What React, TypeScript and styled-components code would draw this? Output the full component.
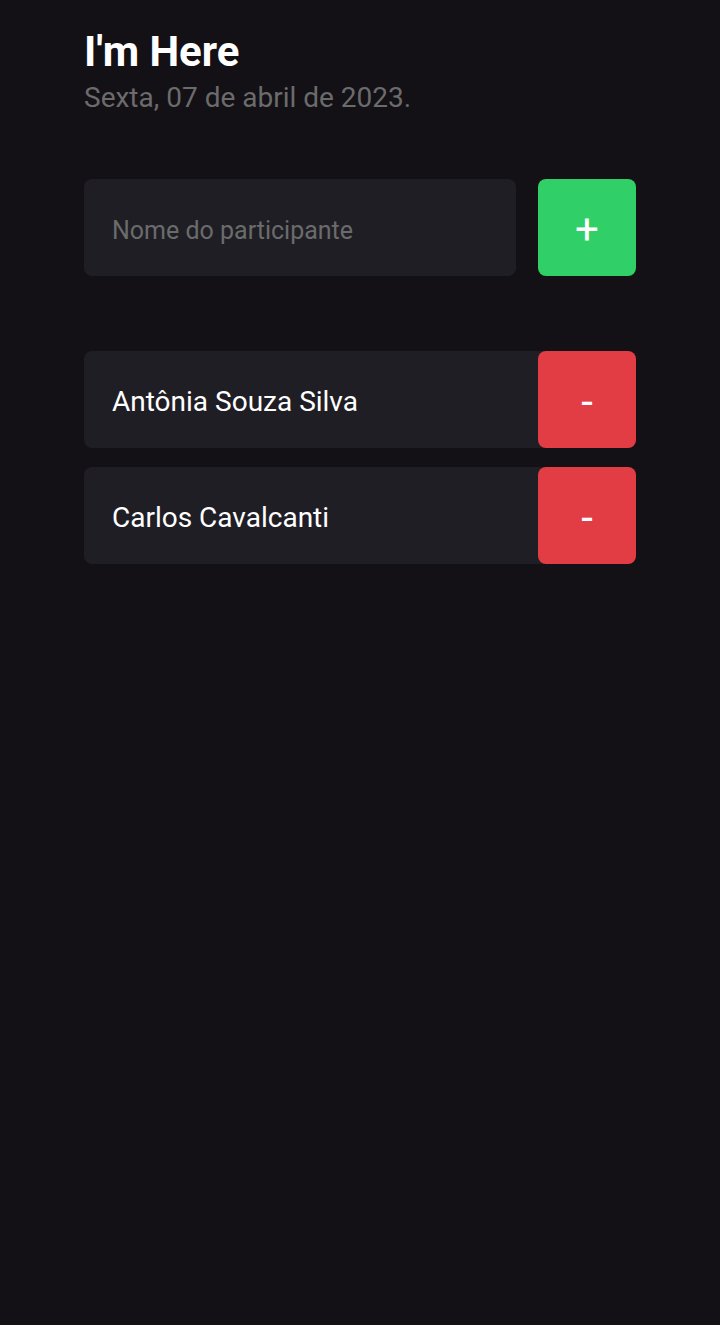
import React from "react";
import styled, { createGlobalStyle } from "styled-components";

const Global = createGlobalStyle`
  html, body { margin: 0; padding: 0; background: #131016; }
  body { font-family: Roboto, "Noto Sans", sans-serif; }
  * { box-sizing: border-box; }
`;

const Screen = styled.div`
  min-height: 1325px;
  background: #131016;
  padding: 25px 84px;
  display: flex;
  flex-direction: column;
`;

const Title = styled.h1`
  margin: 0;
  color: #fff;
  font-family: Roboto, sans-serif;
  font-weight: 700;
  font-size: 42px;
  line-height: 54px;
`;

const DateText = styled.p`
  margin: 0;
  color: #6b6b6b;
  font-family: Roboto, sans-serif;
  font-size: 28px;
  line-height: 37px;
`;

const Form = styled.div`
  display: flex;
  gap: 22px;
  margin-top: 63px;
  margin-bottom: 75px;
`;

const Input = styled.input`
  flex: 1;
  height: 97px;
  border: none;
  outline: none;
  border-radius: 8px;
  background: #1f1e25;
  color: #fff;
  padding: 5px 28px 0;
  font-family: Roboto, sans-serif;
  font-size: 25px;
  &::placeholder { color: #6b6b6b; }
`;

const ActionButton = styled.button<{ $variant: "add" | "remove" }>`
  width: 98px;
  height: 97px;
  flex-shrink: 0;
  border: none;
  border-radius: 8px;
  background: ${(p) => (p.$variant === "add" ? "#31cf67" : "#e23c44")};
  color: #fff;
  font-family: Roboto, sans-serif;
  font-size: 42px;
  line-height: 1;
  display: flex;
  align-items: center;
  justify-content: center;
  padding: 5px 0 0;
`;

const List = styled.div`
  display: flex;
  flex-direction: column;
  gap: 19px;
`;

const Row = styled.div`
  display: flex;
  align-items: center;
  background: #1f1e25;
  border-radius: 8px;
  height: 97px;
`;

const Name = styled.span`
  flex: 1;
  color: #fff;
  font-family: Roboto, sans-serif;
  font-size: 28px;
  padding: 4px 0 0 28px;
`;

const participants = ["Antônia Souza Silva", "Carlos Cavalcanti"];

export default function App() {
  return (
    <>
      <Global />
      <Screen>
        <Title>I'm Here</Title>
        <DateText>Sexta, 07 de abril de 2023.</DateText>
        <Form>
          <Input placeholder="Nome do participante" />
          <ActionButton $variant="add">+</ActionButton>
        </Form>
        <List>
          {participants.map((n) => (
            <Row key={n}>
              <Name>{n}</Name>
              <ActionButton $variant="remove">-</ActionButton>
            </Row>
          ))}
        </List>
      </Screen>
    </>
  );
}
